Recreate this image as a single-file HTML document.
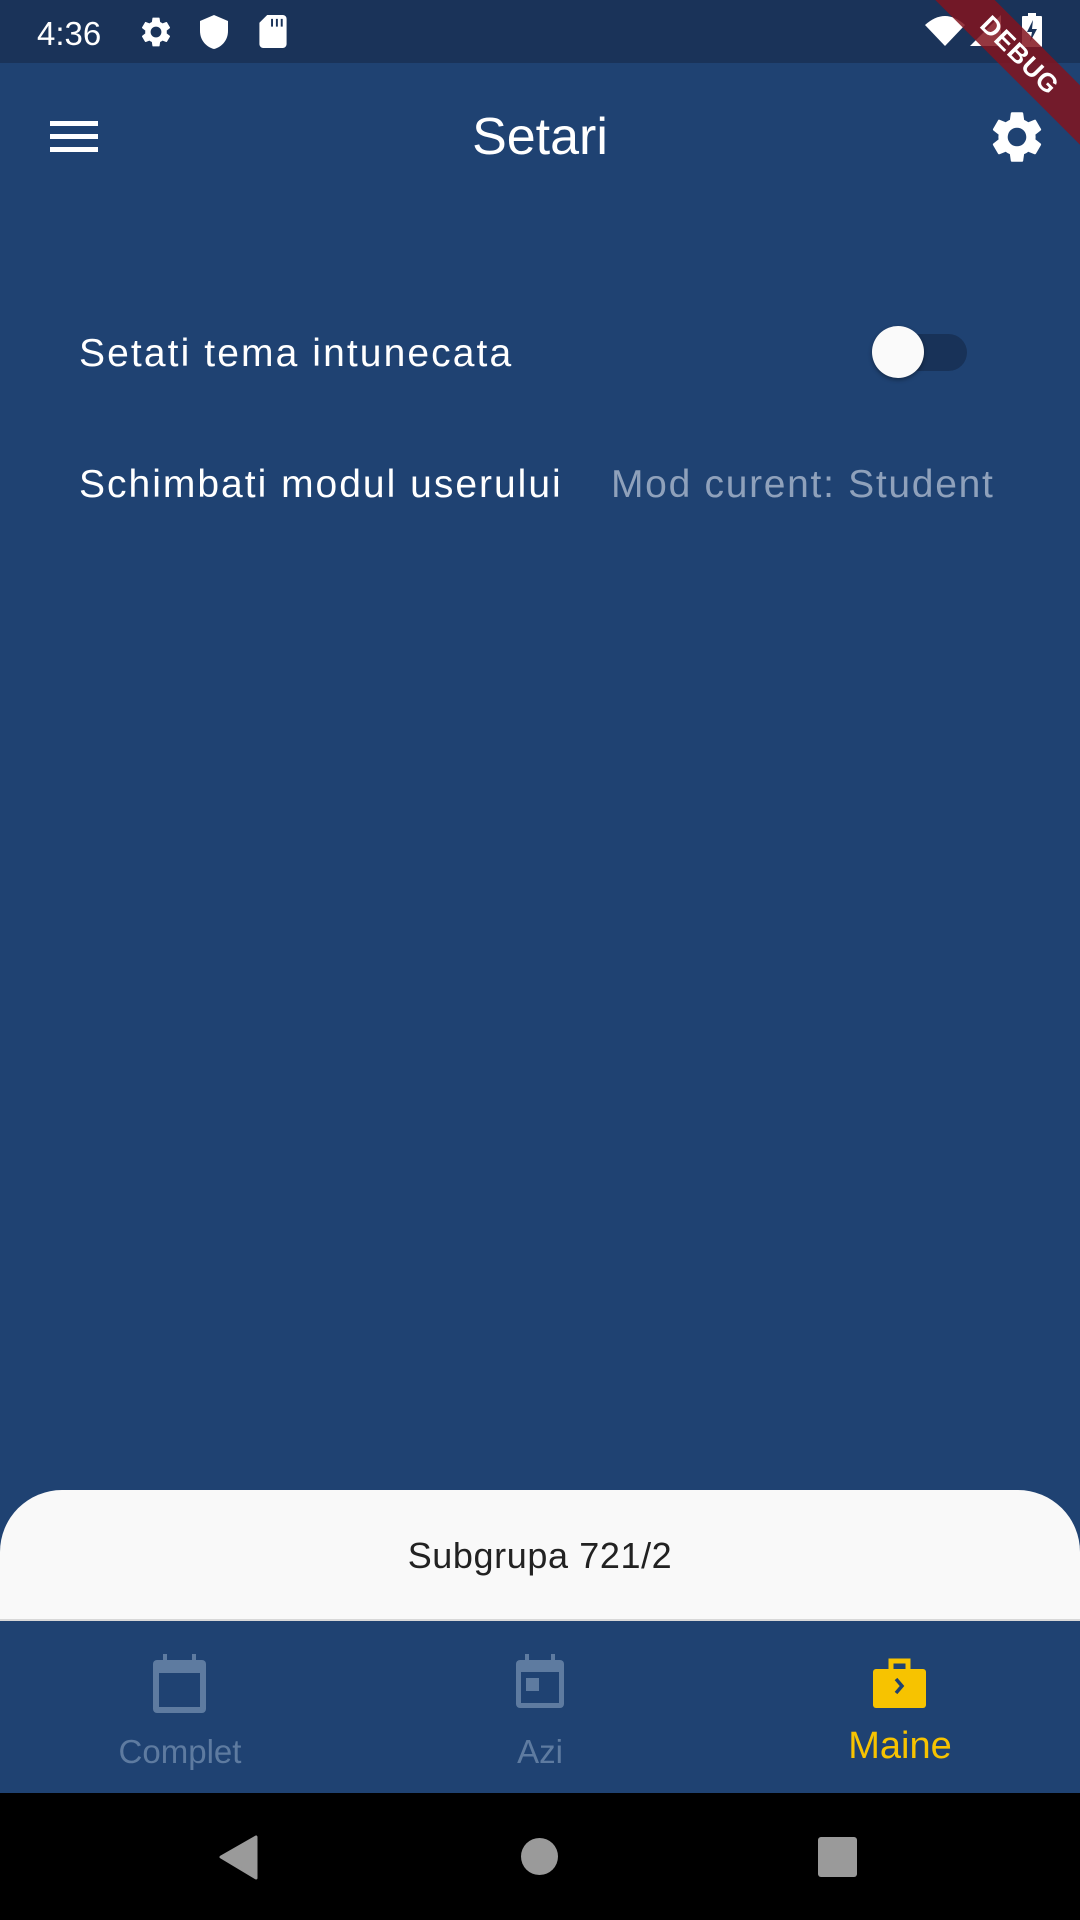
<!DOCTYPE html>
<html><head><meta charset="utf-8"><style>
html,body{margin:0;padding:0}
body{width:1080px;height:1920px;position:relative;overflow:hidden;background:#1f4272;font-family:"Liberation Sans",sans-serif}
.abs{position:absolute}
.t{position:absolute;white-space:nowrap;line-height:1}
</style></head><body>
<div class="abs" style="left:0;top:0;width:1080px;height:63px;background:#1a3359"></div>
<div class="t" style="left:37px;top:17px;font-size:33px;color:#fff;">4:36</div>
<svg class="abs" style="left:138px;top:14px" width="36" height="36" viewBox="0 0 24 24"><path fill="#fff" d="M19.14 12.94c.04-.3.06-.61.06-.94 0-.32-.02-.64-.07-.94l2.03-1.58a.49.49 0 0 0 .12-.61l-1.92-3.32a.49.49 0 0 0-.59-.22l-2.39.96c-.5-.38-1.03-.7-1.62-.94l-.36-2.54a.48.48 0 0 0-.48-.41h-3.84c-.24 0-.43.17-.47.41l-.36 2.54c-.59.24-1.13.57-1.62.94l-2.39-.96a.48.48 0 0 0-.59.22L2.74 8.87c-.12.21-.08.47.12.61l2.030 1.58c-.05.3-.09.63-.09.94s.02.64.07.94l-2.03 1.58a.49.49 0 0 0-.12.61l1.92 3.32c.12.22.37.29.59.22l2.39-.96c.5.38 1.03.7 1.62.94l.36 2.54c.05.24.24.41.48.41h3.84c.24 0 .44-.17.47-.41l.36-2.54c.59-.24 1.13-.56 1.62-.94l2.39.96c.22.08.47 0 .59-.22l1.92-3.32c.12-.22.07-.47-.12-.61l-2.01-1.58zM12 15.6A3.6 3.6 0 1 1 12 8.4a3.6 3.6 0 0 1 0 7.2z"/></svg>
<svg class="abs" style="left:200px;top:15px" width="28" height="34" viewBox="0 0 14 17"><path fill="#fff" d="M7 0L0 3v5c0 4.5 3 8 7 9 4-1 7-4.5 7-9V3z"/></svg>
<svg class="abs" style="left:259px;top:15px" width="28" height="33" viewBox="0 0 14 17"><path fill="#fff" d="M4 0h8a2 2 0 0 1 2 2v13a2 2 0 0 1-2 2H2a2 2 0 0 1-2-2V4z"/><path fill="#1a3359" d="M6 2h1v4H6zM8.5 2h1v4h-1zM11 2h1v4h-1z"/></svg>
<svg class="abs" style="left:925px;top:15px" width="40" height="31" viewBox="0 0 40 31"><path fill="#fff" d="M0 10 Q20 -8 40 10 L20 31Z"/></svg>
<svg class="abs" style="left:970px;top:15px" width="31" height="31"><path fill="#fff" d="M31 0V31H0Z"/></svg>
<svg class="abs" style="left:1022px;top:13px" width="20" height="34" viewBox="0 0 20 34"><rect x="6" y="0" width="8" height="4" fill="#fff"/><rect x="0" y="3" width="20" height="31" rx="1" fill="#fff"/><path fill="#1a3359" d="M11 7L5 19h5l-2 10 7-13h-5z"/></svg>
<!-- app bar -->
<div class="abs" style="left:50px;top:121px;width:48px;height:5px;background:#fff"></div>
<div class="abs" style="left:50px;top:134px;width:48px;height:5px;background:#fff"></div>
<div class="abs" style="left:50px;top:147px;width:48px;height:5px;background:#fff"></div>
<div class="t" style="left:0;width:1080px;text-align:center;top:111px;font-size:52px;color:#fff;">Setari</div>
<svg class="abs" style="left:986px;top:106px" width="62" height="62" viewBox="0 0 24 24"><path fill="#fff" d="M19.14 12.94c.04-.3.06-.61.06-.94 0-.32-.02-.64-.07-.94l2.03-1.58a.49.49 0 0 0 .12-.61l-1.92-3.32a.49.49 0 0 0-.59-.22l-2.39.96c-.5-.38-1.03-.7-1.62-.94l-.36-2.54a.48.48 0 0 0-.48-.41h-3.84c-.24 0-.43.17-.47.41l-.36 2.54c-.59.24-1.13.57-1.62.94l-2.39-.96a.48.48 0 0 0-.59.22L2.74 8.87c-.12.21-.08.47.12.61l2.03 1.58c-.05.3-.09.63-.09.94s.02.64.07.94l-2.03 1.58a.49.49 0 0 0-.12.61l1.92 3.32c.12.22.37.29.59.22l2.39-.96c.5.38 1.03.7 1.62.94l.36 2.54c.05.24.24.41.48.41h3.84c.24 0 .44-.17.47-.41l.36-2.54c.59-.24 1.13-.56 1.62-.94l2.39.96c.22.08.47 0 .59-.22l1.92-3.32c.12-.22.07-.47-.12-.61l-2.01-1.58zM12 15.6A3.6 3.6 0 1 1 12 8.4a3.6 3.6 0 0 1 0 7.2z"/></svg>
<!-- debug banner -->
<div class="abs" style="left:900px;top:34px;width:240px;height:42px;background:rgba(130,20,30,0.85);transform:rotate(45deg);transform-origin:center;color:#fff;font-weight:bold;font-size:26px;line-height:42px;text-align:center;letter-spacing:1px;">DEBUG</div>
<!-- rows -->
<div class="t" style="left:79px;top:334px;font-size:39px;color:#fff;letter-spacing:2.1px;">Setati tema intunecata</div>
<div class="abs" style="left:893px;top:334px;width:74px;height:37px;border-radius:19px;background:#183258"></div>
<div class="abs" style="left:872px;top:326px;width:52px;height:52px;border-radius:50%;background:#fafafa;box-shadow:0 2px 4px rgba(0,0,0,.35)"></div>
<div class="t" style="left:79px;top:465px;font-size:39px;color:#fff;letter-spacing:2px;">Schimbati modul userului</div>
<div class="t" style="left:611px;top:465px;font-size:39px;color:#8fa1bb;letter-spacing:1.7px;">Mod curent: Student</div>
<!-- sheet -->
<div class="abs" style="left:0;top:1490px;width:1080px;height:130px;background:#f9f9f9;border-radius:62px 62px 0 0;"></div>
<div class="t" style="left:0;width:1080px;text-align:center;top:1538px;font-size:36px;color:#222;letter-spacing:0.6px;">Subgrupa 721/2</div>
<div class="abs" style="left:0;top:1619px;width:1080px;height:2px;background:#d8d8d8"></div>
<!-- nav -->
<svg class="abs" style="left:153px;top:1654px" width="53" height="59" viewBox="0 0 53 59"><rect x="10" y="0" width="4" height="8" fill="#5e7ba0"/><rect x="39" y="0" width="4" height="8" fill="#5e7ba0"/><rect x="0" y="6" width="53" height="53" rx="4" fill="#5e7ba0"/><rect x="6" y="19" width="41" height="34" fill="#1f4272"/></svg>
<div class="t" style="left:80px;width:200px;text-align:center;top:1735px;font-size:33px;color:#5e7ba0;">Complet</div>
<svg class="abs" style="left:516px;top:1654px" width="48" height="54" viewBox="0 0 48 54"><rect x="9" y="0" width="4" height="8" fill="#5e7ba0"/><rect x="35" y="0" width="4" height="8" fill="#5e7ba0"/><rect x="0" y="6" width="48" height="48" rx="4" fill="#5e7ba0"/><rect x="5" y="18" width="38" height="31" fill="#1f4272"/><rect x="10" y="24" width="13" height="13" fill="#5e7ba0"/></svg>
<div class="t" style="left:440px;width:200px;text-align:center;top:1735px;font-size:33px;color:#5e7ba0;">Azi</div>
<svg class="abs" style="left:873px;top:1658px" width="53" height="50" viewBox="0 0 53 50"><path d="M18 12V3h17v9" fill="none" stroke="#f7c300" stroke-width="5"/><rect x="0" y="11" width="53" height="39" rx="3" fill="#f7c300"/><path d="M23 21l6 7-6 7" fill="none" stroke="#1f4272" stroke-width="3.5"/></svg>
<div class="t" style="left:800px;width:200px;text-align:center;top:1727px;font-size:38px;color:#f7c300;">Maine</div>
<!-- system nav -->
<div class="abs" style="left:0;top:1793px;width:1080px;height:127px;background:#000"></div>
<svg class="abs" style="left:218px;top:1835px" width="40" height="45"><path d="M38 2V43L3 22Z" fill="#9a9a9a" stroke="#9a9a9a" stroke-width="3" stroke-linejoin="round"/></svg>
<div class="abs" style="left:521px;top:1838px;width:37px;height:37px;border-radius:50%;background:#9a9a9a"></div>
<div class="abs" style="left:818px;top:1837px;width:39px;height:40px;border-radius:3px;background:#9a9a9a"></div>
</body></html>
